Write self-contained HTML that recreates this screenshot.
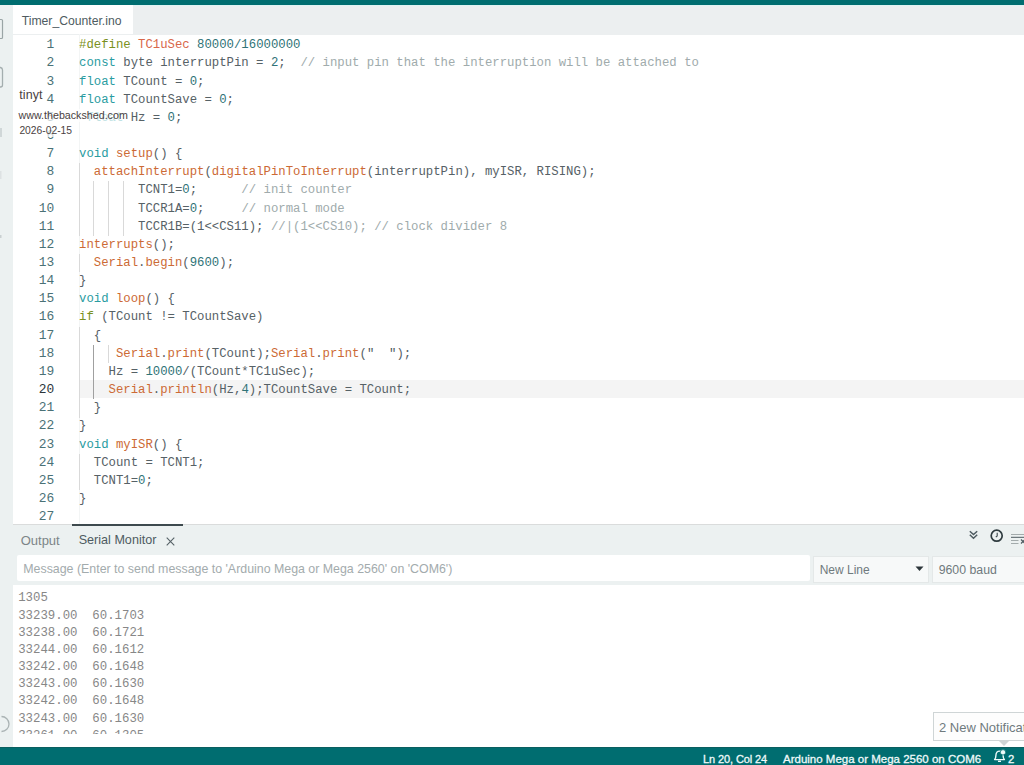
<!DOCTYPE html>
<html><head><meta charset="utf-8">
<style>
*{margin:0;padding:0;box-sizing:border-box}
html,body{width:1024px;height:765px;overflow:hidden;background:#fff;font-family:"Liberation Sans",sans-serif}
.abs{position:absolute}
#topbar{position:absolute;left:0;top:0;width:1024px;height:4.7px;background:#006d70}
#sidebar{position:absolute;left:0;top:4.7px;width:13.2px;height:742px;background:#ecf1f1}
#tabs{position:absolute;left:13.2px;top:5.5px;width:1011px;height:29px;background:#eceff0}
#tab{position:absolute;left:0;top:-1px;width:119.8px;height:29.5px;background:#fff}
#tab span{position:absolute;left:8.5px;top:9.3px;font-size:12.2px;color:#4e5b61;white-space:pre}
#editor{position:absolute;left:13.2px;top:34.6px;width:1011px;height:489.4px;background:#fff}
#gutline{position:absolute;left:78.5px;top:34px;width:1px;height:490px;background:#f3f5f5}
.ln{position:absolute;left:0;width:54.3px;text-align:right;font-family:"Liberation Mono",monospace;font-size:12.9px;line-height:18.15px;height:18.15px;color:#4a7176;white-space:pre}
.ln.act{color:#2c353a}
.cl{position:absolute;left:79px;font-family:"Liberation Mono",monospace;font-size:12.3px;line-height:18.15px;height:18.15px;color:#566166;white-space:pre}
.k{color:#2a9ca1}.p{color:#7a9020}.f{color:#cc6a35}.n{color:#2f7377}.c{color:#a0abac}.s{color:#4e5b61}.r{color:#d8674a}
.fade{color:#2a9ca1}
#panelhdr{position:absolute;left:13.2px;top:524px;width:1011px;height:31px;background:#ecf1f1;border-top:1px solid #dadcdc}
#msgrow{position:absolute;left:13.2px;top:555px;width:1011px;height:30px;background:#ecf1f1}
#serial{position:absolute;left:13.2px;top:584.5px;width:1011px;height:162.3px;background:#fff}
#serclip{position:absolute;left:0;top:0;width:100%;height:149.5px;overflow:hidden}
.sl{position:absolute;left:5px;margin-top:5.9px;font-family:"Liberation Mono",monospace;font-size:12.36px;line-height:17.17px;color:#878787;white-space:pre}
#status{position:absolute;left:0;top:746.8px;width:1024px;height:19px;background:#006d70;color:#eefafa;font-size:11px;-webkit-text-stroke:0.3px #eefafa;border-top:1px solid #0b5f60}
</style></head><body>
<div id="topbar"></div><div style="position:absolute;left:0;top:4.7px;width:1024px;height:1px;background:#dff3f3"></div>
<div id="sidebar"></div>
<svg style="position:absolute;left:0;top:0" width="13" height="746" viewBox="0 0 13 746">
 <path d="M-6 19.5H1.5Q2.5 19.5 2.5 20.5V37.5Q2.5 38.5 1.5 38.5H-6" fill="none" stroke="#9aa5a6" stroke-width="1.2"/>
 <path d="M-6 67.5H0.5Q2.5 68 2.5 70V85Q2.5 87 0.5 87H-6" fill="none" stroke="#a4aeaf" stroke-width="1.3"/>
 <rect x="0" y="128" width="2" height="9" fill="#d0d7d8"/>
 <rect x="0" y="171" width="1.5" height="8" fill="#dde2e3"/>
 <rect x="0" y="235" width="1.5" height="3" fill="#c9d0d1"/>
 <path d="M-6 716.5A7.5 7.5 0 0 1 -6 731.5" transform="translate(7.5,0)" fill="none" stroke="#aab3b4" stroke-width="1.3"/>
</svg>
<div id="tabs"><div id="tab"><span>Timer_Counter.ino</span></div></div>
<div id="editor"></div><div id="gutline"></div>
<div style="position:absolute;left:79px;top:380.15px;width:945px;height:18.15px;background:#f4f4f4"></div>
<div style="position:absolute;left:79.00px;top:163.25px;width:1px;height:18.45px;background:#d9d9d9"></div>
<div style="position:absolute;left:79.00px;top:181.40px;width:1px;height:18.45px;background:#d9d9d9"></div>
<div style="position:absolute;left:93.00px;top:181.40px;width:1px;height:18.45px;background:#d9d9d9"></div>
<div style="position:absolute;left:108.00px;top:181.40px;width:1px;height:18.45px;background:#d9d9d9"></div>
<div style="position:absolute;left:123.00px;top:181.40px;width:1px;height:18.45px;background:#d9d9d9"></div>
<div style="position:absolute;left:79.00px;top:199.55px;width:1px;height:18.45px;background:#d9d9d9"></div>
<div style="position:absolute;left:93.00px;top:199.55px;width:1px;height:18.45px;background:#d9d9d9"></div>
<div style="position:absolute;left:108.00px;top:199.55px;width:1px;height:18.45px;background:#d9d9d9"></div>
<div style="position:absolute;left:123.00px;top:199.55px;width:1px;height:18.45px;background:#d9d9d9"></div>
<div style="position:absolute;left:79.00px;top:217.70px;width:1px;height:18.45px;background:#d9d9d9"></div>
<div style="position:absolute;left:93.00px;top:217.70px;width:1px;height:18.45px;background:#d9d9d9"></div>
<div style="position:absolute;left:108.00px;top:217.70px;width:1px;height:18.45px;background:#d9d9d9"></div>
<div style="position:absolute;left:123.00px;top:217.70px;width:1px;height:18.45px;background:#d9d9d9"></div>
<div style="position:absolute;left:79.00px;top:254.00px;width:1px;height:18.45px;background:#d9d9d9"></div>
<div style="position:absolute;left:79.00px;top:326.60px;width:1px;height:18.45px;background:#d9d9d9"></div>
<div style="position:absolute;left:79.00px;top:344.75px;width:1px;height:18.45px;background:#d9d9d9"></div>
<div style="position:absolute;left:93.00px;top:344.75px;width:1px;height:18.45px;background:#a0a0a0"></div>
<div style="position:absolute;left:108.00px;top:344.75px;width:1px;height:18.45px;background:#d9d9d9"></div>
<div style="position:absolute;left:79.00px;top:362.90px;width:1px;height:18.45px;background:#d9d9d9"></div>
<div style="position:absolute;left:93.00px;top:362.90px;width:1px;height:18.45px;background:#a0a0a0"></div>
<div style="position:absolute;left:79.00px;top:381.05px;width:1px;height:18.45px;background:#d9d9d9"></div>
<div style="position:absolute;left:93.00px;top:381.05px;width:1px;height:18.45px;background:#a0a0a0"></div>
<div style="position:absolute;left:79.00px;top:399.20px;width:1px;height:18.45px;background:#d9d9d9"></div>
<div style="position:absolute;left:79.00px;top:453.65px;width:1px;height:18.45px;background:#d9d9d9"></div>
<div style="position:absolute;left:79.00px;top:471.80px;width:1px;height:18.45px;background:#d9d9d9"></div>
<div class="ln" style="top:36.20px">1</div>
<div class="cl" style="top:36.20px"><span class="p">#define</span> <span class="r">TC1uSec</span> <span class="n">80000/16000000</span></div>
<div class="ln" style="top:54.35px">2</div>
<div class="cl" style="top:54.35px"><span class="k">const</span> byte interruptPin = <span class="n">2</span>;  <span class="c">// input pin that the interruption will be attached to</span></div>
<div class="ln" style="top:72.50px">3</div>
<div class="cl" style="top:72.50px"><span class="k">float</span> TCount = <span class="n">0</span>;</div>
<div class="ln" style="top:90.65px">4</div>
<div class="cl" style="top:90.65px"><span class="k">float</span> TCountSave = <span class="n">0</span>;</div>
<div class="ln" style="top:108.80px">5</div>
<div class="cl" style="top:108.80px"> <span class="fade">float</span> Hz = <span class="n">0</span>;</div>
<div class="ln" style="top:126.95px">6</div>
<div class="cl" style="top:126.95px"></div>
<div class="ln" style="top:145.10px">7</div>
<div class="cl" style="top:145.10px"><span class="k">void</span> <span class="f">setup</span>() {</div>
<div class="ln" style="top:163.25px">8</div>
<div class="cl" style="top:163.25px">  <span class="f">attachInterrupt</span>(<span class="f">digitalPinToInterrupt</span>(interruptPin), myISR, RISING);</div>
<div class="ln" style="top:181.40px">9</div>
<div class="cl" style="top:181.40px">        TCNT1=<span class="n">0</span>;      <span class="c">// init counter</span></div>
<div class="ln" style="top:199.55px">10</div>
<div class="cl" style="top:199.55px">        TCCR1A=<span class="n">0</span>;     <span class="c">// normal mode</span></div>
<div class="ln" style="top:217.70px">11</div>
<div class="cl" style="top:217.70px">        TCCR1B=(1&lt;&lt;CS11); <span class="c">//|(1&lt;&lt;CS10); // clock divider 8</span></div>
<div class="ln" style="top:235.85px">12</div>
<div class="cl" style="top:235.85px"><span class="f">interrupts</span>();</div>
<div class="ln" style="top:254.00px">13</div>
<div class="cl" style="top:254.00px">  <span class="f">Serial</span>.<span class="f">begin</span>(<span class="n">9600</span>);</div>
<div class="ln" style="top:272.15px">14</div>
<div class="cl" style="top:272.15px">}</div>
<div class="ln" style="top:290.30px">15</div>
<div class="cl" style="top:290.30px"><span class="k">void</span> <span class="f">loop</span>() {</div>
<div class="ln" style="top:308.45px">16</div>
<div class="cl" style="top:308.45px"><span class="p">if</span> (TCount != TCountSave)</div>
<div class="ln" style="top:326.60px">17</div>
<div class="cl" style="top:326.60px">  {</div>
<div class="ln" style="top:344.75px">18</div>
<div class="cl" style="top:344.75px">     <span class="f">Serial</span>.<span class="f">print</span>(TCount);<span class="f">Serial</span>.<span class="f">print</span>(<span class="s">&quot;  &quot;</span>);</div>
<div class="ln" style="top:362.90px">19</div>
<div class="cl" style="top:362.90px">    Hz = <span class="n">10000</span>/(TCount*TC1uSec);</div>
<div class="ln act" style="top:381.05px">20</div>
<div class="cl" style="top:381.05px">    <span class="f">Serial</span>.<span class="f">println</span>(Hz,<span class="n">4</span>);TCountSave = TCount;</div>
<div class="ln" style="top:399.20px">21</div>
<div class="cl" style="top:399.20px">  }</div>
<div class="ln" style="top:417.35px">22</div>
<div class="cl" style="top:417.35px">}</div>
<div class="ln" style="top:435.50px">23</div>
<div class="cl" style="top:435.50px"><span class="k">void</span> <span class="f">myISR</span>() {</div>
<div class="ln" style="top:453.65px">24</div>
<div class="cl" style="top:453.65px">  TCount = TCNT1;</div>
<div class="ln" style="top:471.80px">25</div>
<div class="cl" style="top:471.80px">  TCNT1=<span class="n">0</span>;</div>
<div class="ln" style="top:489.95px">26</div>
<div class="cl" style="top:489.95px">}</div>
<div class="ln" style="top:508.10px">27</div>
<div class="cl" style="top:508.10px"></div>
<div id="panelhdr">
 <span style="position:absolute;left:7.5px;top:8px;font-size:13px;color:#7c8588">Output</span>
 <span style="position:absolute;left:65.5px;top:8px;font-size:12.6px;color:#4e5b61">Serial Monitor</span>
 <svg style="position:absolute;left:152.5px;top:11.5px" width="9" height="9" viewBox="0 0 9 9"><path d="M0.7 0.7L8.3 8.3M8.3 0.7L0.7 8.3" stroke="#566166" stroke-width="1.1"/></svg>
 <div style="position:absolute;left:58.5px;top:-1px;width:111px;height:1.6px;background:#3e4a4e"></div>
 <svg style="position:absolute;left:955.5px;top:4.6px" width="10" height="10" viewBox="0 0 10 10"><path d="M0.8 1.2L4.5 4.6L8.2 1.2M0.8 4.8L4.5 8.2L8.2 4.8" fill="none" stroke="#4e5b61" stroke-width="1.5"/></svg>
 <svg style="position:absolute;left:976.5px;top:3.5px" width="14" height="14" viewBox="0 0 14 14"><circle cx="6.7" cy="6.7" r="5.5" fill="none" stroke="#2f3b3f" stroke-width="1.7"/><path d="M7.2 3.8V6.9L5.8 8.2" fill="none" stroke="#3e4a4e" stroke-width="1.1"/></svg>
 <svg style="position:absolute;left:997.5px;top:7.5px" width="17" height="13" viewBox="0 0 17 13"><path d="M0 1.5H17M0 7.5H7.5M0 10.5H7.5" fill="none" stroke="#a3abac" stroke-width="1.2"/><path d="M0 4.3H17" stroke="#4e5b61" stroke-width="1"/><path d="M10 6.5L14 10.5M14 6.5L10 10.5" stroke="#4e5b61" stroke-width="1.2"/></svg>
</div>
<div id="msgrow">
 <div style="position:absolute;left:3.4px;top:0.1px;width:793.8px;height:26.4px;background:#fff;border-radius:2px"></div>
 <span style="position:absolute;left:10.1px;top:7px;font-size:12.38px;color:#a3abad;white-space:pre">Message (Enter to send message to 'Arduino Mega or Mega 2560' on 'COM6')</span>
 <div style="position:absolute;left:799.5px;top:0.5px;width:116px;height:27.5px;background:#f7f9f9;border:1px solid #e4e8e8"></div>
 <span style="position:absolute;left:806.5px;top:7.5px;font-size:12px;color:#6f7a7d">New Line</span>
 <svg style="position:absolute;left:902px;top:11px" width="9" height="6" viewBox="0 0 9 6"><path d="M0.5 0.5H8.5L4.5 5Z" fill="#2c353a"/></svg>
 <div style="position:absolute;left:919px;top:0.5px;width:100px;height:27.5px;background:#f7f9f9;border:1px solid #e4e8e8"></div>
 <span style="position:absolute;left:925.5px;top:7.5px;font-size:12.3px;color:#6f7a7d">9600 baud</span>
</div>
<div id="serial">
<div id="serclip">
<div class="sl" style="top:0.00px">1305</div>
<div class="sl" style="top:17.17px">33239.00  60.1703</div>
<div class="sl" style="top:34.34px">33238.00  60.1721</div>
<div class="sl" style="top:51.51px">33244.00  60.1612</div>
<div class="sl" style="top:68.68px">33242.00  60.1648</div>
<div class="sl" style="top:85.85px">33243.00  60.1630</div>
<div class="sl" style="top:103.02px">33242.00  60.1648</div>
<div class="sl" style="top:120.19px">33243.00  60.1630</div>
<div class="sl" style="top:137.36px">33261.00  60.1305</div>
</div></div>
<div id="status">
 <span style="position:absolute;left:703px;top:5px;font-size:11px;letter-spacing:-0.1px;white-space:pre">Ln 20, Col 24</span>
 <span style="position:absolute;left:783px;top:5px;font-size:11.5px;white-space:pre">Arduino Mega or Mega 2560 on COM6</span>
 <svg style="position:absolute;left:992px;top:0.7px" width="16" height="16" viewBox="0 0 16 16"><path d="M2.6 11.6C3.6 10.6 3.9 9.6 3.9 7.6C3.9 4.6 5.5 3.1 7.5 3.1C9.5 3.1 11.1 4.6 11.1 7.6C11.1 9.6 11.4 10.6 12.4 11.6Z" fill="none" stroke="#eefafa" stroke-width="1.4" stroke-linejoin="round"/><path d="M6 13.3H9" stroke="#eefafa" stroke-width="1.4"/><circle cx="11" cy="4.3" r="2.7" fill="#eefafa" stroke="#006d70" stroke-width="0.8"/></svg>
 <span style="position:absolute;left:1008px;top:5.5px;font-size:11.3px">2</span>
</div>
<div style="position:absolute;left:932.5px;top:712.3px;width:120px;height:29px;background:#fdfdfd;border:1px solid #cfd5d6"></div>
<svg style="position:absolute;left:999px;top:740.5px" width="10" height="6" viewBox="0 0 10 6"><path d="M0 0H10L5 5Z" fill="#cfd5d6"/></svg>
<span style="position:absolute;left:939px;top:720px;font-size:13px;color:#6f7a7d;white-space:pre">2 New Notificat</span>
<div style="position:absolute;left:19.2px;top:86.5px;height:16px;line-height:16px;font-size:12.5px;letter-spacing:0.1px;color:#4a3f3f;white-space:pre;background:rgba(255,255,255,0.85)">tinyt</div>
<div style="position:absolute;left:18.5px;top:108.7px;height:13px;line-height:13px;font-size:10.7px;color:#4a3f3f;white-space:pre;background:rgba(255,255,255,0.7)">www.thebackshed.com</div>
<div style="position:absolute;left:19.4px;top:124px;height:13px;line-height:13px;font-size:10.3px;color:#4a3f3f;white-space:pre;background:rgba(255,255,255,0.7)">2026-02-15</div>
</body></html>
